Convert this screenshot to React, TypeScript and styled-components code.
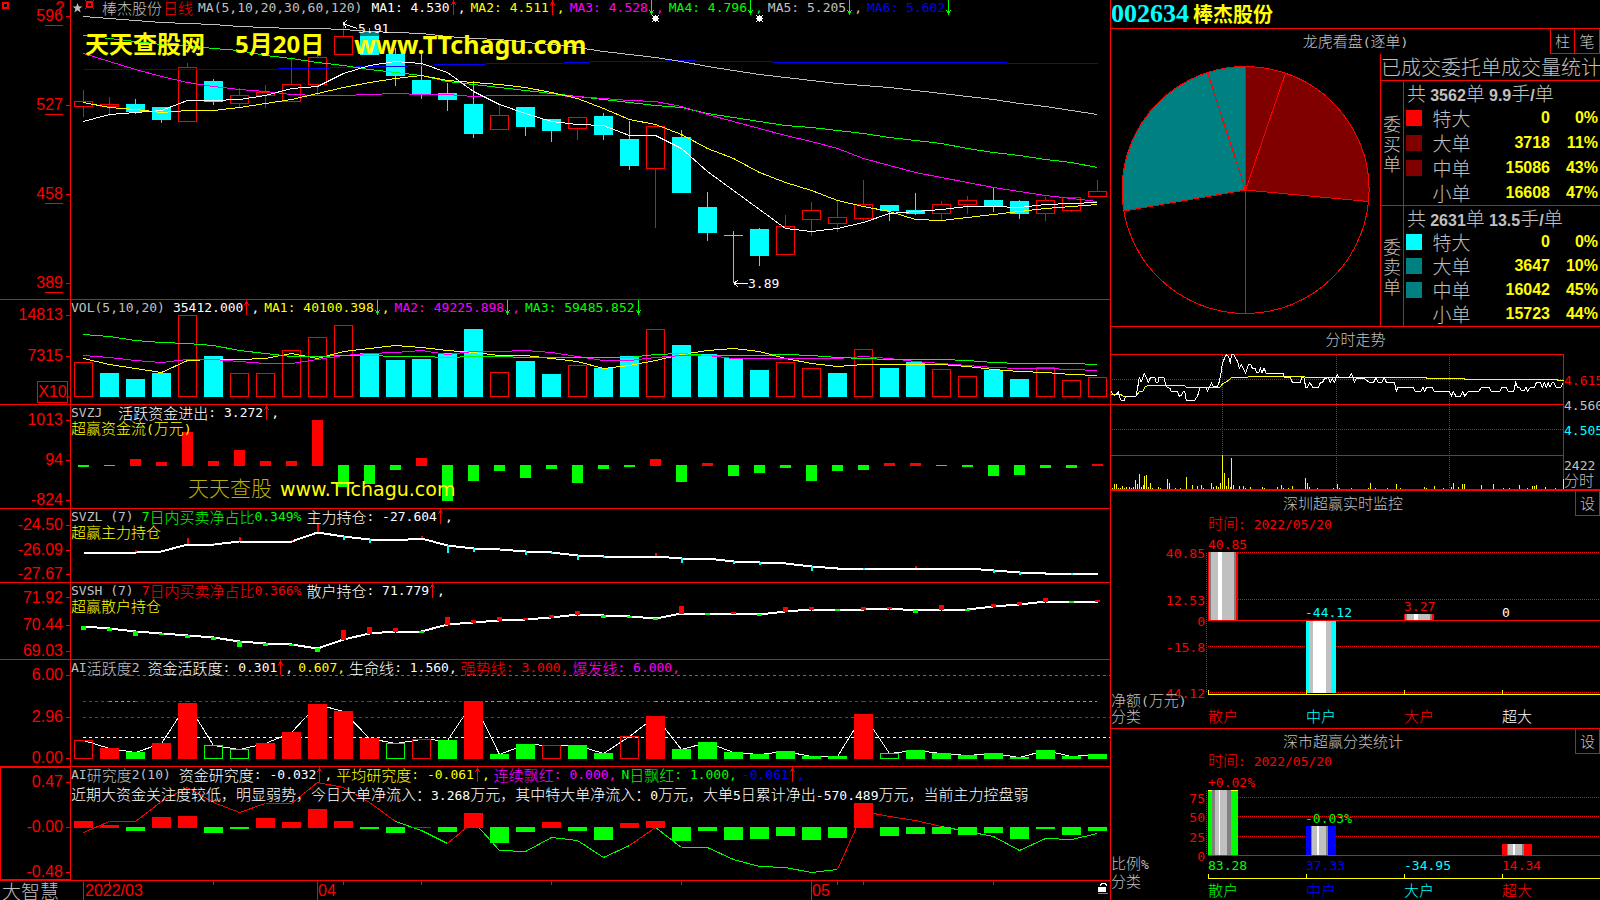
import React from 'react';
import styled, { createGlobalStyle } from 'styled-components';

const RED = '#ff0000';
const GREEN = '#00ff00';
const CYAN = '#00ffff';
const YELLOW = '#ffff00';
const MAGENTA = '#ff00ff';
const BLUE = '#0000ff';
const GRAY = '#c0c0c0';
const DIM = '#808080';
const WHITE = '#ffffff';
const MAROON = '#800000';
const TEAL = '#008080';

const MONO = '"DejaVu Sans Mono", "Noto Sans CJK SC", monospace';
const SANS = '"Liberation Sans", "Noto Sans CJK SC", sans-serif';
const HAN = '"Noto Sans CJK SC", sans-serif';

const GlobalStyle = createGlobalStyle`
  *, *::before, *::after { box-sizing: border-box; }
  body { margin: 0; background: #000; color: ${GRAY}; font-family: ${SANS}; }
`;

/* ---------- layout ---------- */

const Page = styled.main`
  display: grid;
  grid-template-columns: minmax(0, 1fr) 490px;
  min-height: 100vh;
`;

const Charts = styled.section`
  display: grid;
  grid-template-rows: 299fr 105fr 104fr 74fr 77fr 107fr 114fr 20fr;
  min-width: 0;
`;

const Panel = styled.section<{ $first?: boolean }>`
  display: grid;
  grid-template-columns: 71px minmax(0, 1fr);
  border-top: ${(p) => (p.$first ? '0' : `1px solid ${RED}`)};
  min-height: 0;
`;

const Axis = styled.div<{ $active?: boolean }>`
  position: relative;
  border-right: 1px solid ${RED};
  outline: ${(p) => (p.$active ? `1px solid ${RED}` : 'none')};
  outline-offset: -1px;
  color: ${RED};
  font-size: 16px;
  line-height: 18px;
`;

const Tick = styled.div`
  position: absolute;
  right: 0;
  display: flex;
  align-items: center;
  gap: 3px;
  transform: translateY(-50%);
  &::after {
    content: '';
    width: 4px;
    height: 1px;
    background: ${RED};
  }
`;

const Under = styled.span`
  display: inline-block;
  border-bottom: 1px solid ${RED};
  margin-bottom: -1px;
`;

const Multiplier = styled.div`
  position: absolute;
  right: 2px;
  bottom: 1px;
  border: 1px solid ${RED};
  width: 31px;
  height: 22px;
  line-height: 20px;
  text-align: center;
`;

const HelpMark = styled.button`
  position: absolute;
  right: 5px;
  top: 0;
  padding: 0;
  border: 0;
  background: none;
  color: #d00000;
  font: bold 16px/16px ${SANS};
`;

const CornerIcon = styled.svg`
  position: absolute;
  left: 1px;
  top: 1px;
  width: 10px;
  height: 10px;
`;

const Plot = styled.div`
  position: relative;
  min-width: 0;
`;

const PlotSvg = styled.svg`
  position: absolute;
  inset: 0;
  width: 100%;
  height: 100%;
  display: block;
`;

const Legend = styled.div`
  position: relative;
  display: flex;
  height: 15px;
  font: 300 15px/15px ${HAN};
  white-space: pre;
`;

const Part = styled.span<{ $color: string; $gap?: number }>`
  display: flex;
  align-items: center;
  color: ${(p) => p.$color};
  margin-right: ${(p) => p.$gap ?? 5}px;
`;

const Ascii = styled.span`
  font: 13px/15px ${MONO};
  white-space: pre;
`;

const Note = styled.p<{ $color: string; $space?: boolean }>`
  position: relative;
  margin: ${(p) => (p.$space ? '4px' : '0')} 0 0;
  color: ${(p) => p.$color};
  font: 300 15px/15px ${HAN};
  white-space: pre;
`;

const Watermark = styled.div`
  position: absolute;
  display: flex;
  color: ${YELLOW};
  white-space: pre;
`;

const TopMark = styled(Watermark)`
  left: 14px;
  top: 30px;
  gap: 30px;
  font: bold 24px/28px "Noto Sans", "Noto Sans CJK SC", sans-serif;
  & > span:last-child { font-size: 25px; }
`;

const FlowMark = styled(Watermark)`
  left: 117px;
  top: 70px;
  gap: 8px;
  font: 20px/28px "DejaVu Sans", "Noto Sans CJK SC", sans-serif;
  & > span:first-child { color: #b8b000; font-weight: 300; font-size: 21px; }
  & > span:last-child { font-size: 19px; }
`;

const PriceTag = styled.span`
  position: absolute;
  display: flex;
  align-items: center;
  color: ${WHITE};
  font: 13px/14px ${MONO};
  transform: translateY(-50%);
`;

const Brand = styled.div`
  color: ${GRAY};
  font: 300 19px/19px ${HAN};
  padding-left: 2px;
`;

const DateLabel = styled.span`
  position: absolute;
  top: 0;
  color: ${RED};
  font: 16px/19px ${SANS};
`;

const LockIcon = styled.svg`
  position: absolute;
  right: 2px;
  top: 1px;
  width: 11px;
  height: 12px;
`;

/* ---------- side column ---------- */

const Side = styled.aside`
  border-left: 1px solid ${RED};
  min-width: 0;
`;

const StockHead = styled.header`
  display: flex;
  align-items: center;
  gap: 4px;
  height: 28px;
  font: bold 20px/28px ${HAN};
  color: ${YELLOW};
`;

const Code = styled.span`
  color: ${CYAN};
  font: bold 26px/28px "Liberation Serif", serif;
`;

const Box = styled.section<{ $thick?: boolean }>`
  border-top: ${(p) => (p.$thick ? 2 : 1)}px solid ${RED};
`;

const TitleRow = styled.div<{ $height?: number; $pad?: number }>`
  display: flex;
  height: ${(p) => p.$height ?? 25}px;
  padding-left: ${(p) => p.$pad ?? 0}px;
`;

const Title = styled.h2`
  flex: 1;
  margin: 0;
  text-align: center;
  color: ${GRAY};
  font: 300 15px/23px ${HAN};
`;

const SmallButton = styled.button`
  width: 25px;
  height: 25px;
  padding: 0;
  border: 1px solid ${RED};
  border-top: 0;
  background: #000;
  color: ${GRAY};
  font: 300 15px/20px ${HAN};
  & + & { border-left: 0; }
`;

const OrderBody = styled.div`
  display: grid;
  grid-template-columns: 269px minmax(0, 1fr);
  height: 272px;
`;

const Orders = styled.div`
  display: grid;
  grid-template-columns: minmax(0, 1fr);
  grid-template-rows: 26px 125fr 121fr;
  border-left: 1px solid ${RED};
`;

const OrdersTitle = styled.h3`
  margin: 0;
  color: ${GRAY};
  font: 300 20px/26px ${HAN};
  white-space: nowrap;
`;

const Group = styled.div`
  display: grid;
  grid-template-columns: 22px minmax(0, 1fr);
  border-top: 1px solid ${RED};
  min-height: 0;
`;

const Vertical = styled.div`
  display: flex;
  flex-direction: column;
  justify-content: center;
  align-items: center;
  color: ${GRAY};
  font: 300 18px/20px ${HAN};
`;

const OrderTable = styled.table`
  width: 100%;
  height: 100%;
  table-layout: fixed;
  border-collapse: collapse;
  border-left: 1px solid ${RED};
  color: ${GRAY};
  font: 300 19px/20px ${HAN};
  tr { height: 20%; }
  td, th { padding: 0; font-weight: 300; text-align: left; white-space: nowrap; }
`;

const Total = styled.th`
  && { padding-left: 3px; }
`;

const Figure = styled.span`
  font: bold 16px/16px ${SANS};
`;

const Num = styled.td`
  && {
    padding-right: 2px;
    text-align: right;
    color: ${YELLOW};
    font: bold 16px/20px ${SANS};
  }
`;

const Swatch = styled.span<{ $color: string }>`
  display: block;
  width: 16px;
  height: 16px;
  margin-left: 2px;
  background: ${(p) => p.$color};
`;

const Drawing = styled.svg`
  display: block;
  width: 489px;
  text { font: 13px ${MONO}; white-space: pre; }
  .han { font: 300 15px ${HAN}; }
`;

const PieSvg = styled.svg`
  display: block;
  width: 269px;
  height: 272px;
`;

/* ---------- text helpers ---------- */

const runs = (text: string) => text.split(/([\x20-\x7e]+)/).filter(Boolean);
const isAscii = (s: string) => /^[\x20-\x7e]+$/.test(s);

const Mixed = ({ text }: { text: string }) => (
  <>{runs(text).map((r, i) => (isAscii(r) ? <Ascii key={i}>{r}</Ascii> : <span key={i}>{r}</span>))}</>
);

const SvgText = ({ x, y, fill, text, end }: { x: number; y: number; fill: string; text: string; end?: boolean }) => (
  <text x={x} y={y + 4} fill={fill} textAnchor={end ? 'end' : 'start'}>
    {runs(text).map((r, i) => (
      <tspan key={i} className={isAscii(r) ? undefined : 'han'}>{r}</tspan>
    ))}
  </text>
);

const Arrow = ({ dir }: { dir: 'up' | 'down' }) => (
  <svg width="8" height="15" viewBox="0 0 8 15" shapeRendering="crispEdges">
    {dir === 'up' ? (
      <path d="M3 0h1v15h-1zM2 2h3v2h-3zM1 4h1v1h-1zM5 4h1v1h-1z" fill={RED} />
    ) : (
      <path d="M3 0h1v15h-1zM2 11h3v2h-3zM1 10h1v1h-1zM5 10h1v1h-1z" fill={GREEN} />
    )}
  </svg>
);

type Item = { t: string; c: string; a?: 'up' | 'down'; g?: number };

const LegendItems = ({ items }: { items: Item[] }) => (
  <>
    {items.map((it, i) => (
      <Part key={i} $color={it.c} $gap={it.g}>
        <Mixed text={it.t} />
        {it.a && <Arrow dir={it.a} />}
        {it.a && <Ascii>,</Ascii>}
      </Part>
    ))}
  </>
);

/* ---------- chart helpers ---------- */

const LEFT = 71;
const SPAN = 1039;
const cx = (i: number) => 83 + 26 * i;
const pctX = (x: number) => `${((x - LEFT) / SPAN) * 100}%`;

const points = (ys: number[]) => ys.map((y, i) => `${cx(i) + 0.5},${y + 0.5}`).join(' ');

const Line = ({ ys, color, w = 1 }: { ys: number[]; color: string; w?: number }) => (
  <polyline points={points(ys)} fill="none" stroke={color} strokeWidth={w} vectorEffect="non-scaling-stroke" />
);

const Hollow = ({ i, top, bottom, color }: { i: number; top: number; bottom: number; color: string }) => (
  <rect x={cx(i) - 8.5} y={top + 0.5} width={18} height={Math.max(1, bottom - top)} fill="none" stroke={color} vectorEffect="non-scaling-stroke" />
);

const Solid = ({ i, top, bottom, color, w = 19 }: { i: number; top: number; bottom: number; color: string; w?: number }) => (
  <rect x={cx(i) - (w - 1) / 2} y={top} width={w} height={Math.max(1, bottom - top)} fill={color} />
);

type PanelProps = {
  top: number;
  height: number;
  first?: boolean;
  active?: boolean;
  ticks: [number, React.ReactNode][];
  axisExtra?: React.ReactNode;
  drawing: React.ReactNode;
  children: React.ReactNode;
};

const ChartPanel = ({ top, height, first, active, ticks, axisExtra, drawing, children }: PanelProps) => {
  const y0 = first ? top : top + 1;
  const h = first ? height : height - 1;
  return (
    <Panel $first={first}>
      <Axis $active={active}>
        {ticks.map(([y, label], i) => (
          <Tick key={i} style={{ top: `${((y - y0) / h) * 100}%` }}>
            <span>{label}</span>
          </Tick>
        ))}
        {axisExtra}
      </Axis>
      <Plot>
        <PlotSvg viewBox={`${LEFT} ${y0} ${SPAN} ${h}`} preserveAspectRatio="none" shapeRendering="crispEdges">
          {drawing}
        </PlotSvg>
        {children}
      </Plot>
    </Panel>
  );
};

/* ---------- data ---------- */

// [kind, high, body top, body bottom, low]
const candles: [string, number, number, number, number][] = [
  ['r', 90, 101, 106, 117], ['r', 97, 104, 106, 116], ['c', 99, 104, 112, 114], ['c', 107, 107, 120, 123],
  ['r', 63, 67, 121, 121], ['c', 79, 81, 102, 105], ['r', 88, 95, 103, 108], ['r', 85, 92, 95, 108],
  ['r', 57, 84, 101, 101], ['r', 50, 57, 84, 95], ['r', 24, 36, 54, 54], ['c', 28, 32, 55, 55],
  ['c', 48, 54, 76, 86], ['c', 50, 80, 94, 99], ['c', 83, 93, 100, 111], ['c', 81, 104, 134, 138],
  ['r', 104, 115, 129, 129], ['c', 107, 107, 127, 136], ['c', 119, 119, 131, 142], ['r', 117, 117, 128, 140],
  ['c', 113, 116, 135, 140], ['c', 121, 139, 166, 170], ['r', 125, 126, 168, 228], ['c', 130, 137, 193, 193],
  ['c', 192, 207, 233, 241], ['c', 231, 235, 236, 283], ['c', 228, 229, 256, 266], ['r', 215, 226, 254, 254],
  ['r', 202, 210, 219, 236], ['r', 201, 217, 223, 232], ['r', 180, 204, 218, 221], ['c', 205, 205, 211, 221],
  ['c', 193, 210, 214, 215], ['r', 201, 204, 213, 220], ['r', 196, 200, 204, 214], ['c', 188, 200, 206, 212],
  ['c', 200, 201, 214, 219], ['r', 197, 200, 213, 221], ['r', 197, 197, 210, 212], ['r', 180, 191, 196, 196],
];

const ma1 = [121, 114, 112, 110, 100, 100, 99, 95, 88, 86, 73, 65, 61, 63, 72, 91, 104, 113, 121, 124, 125, 135, 135, 148, 171, 190, 209, 228, 231, 228, 222, 213, 211, 209, 206, 206, 207, 204, 203, 202];
const ma2 = [102, 107, 109, 112, 110, 110, 107, 103, 99, 93, 87, 82, 78, 75, 80, 82, 84, 87, 92, 98, 108, 119, 124, 134, 148, 158, 172, 182, 190, 200, 206, 211, 219, 220, 217, 214, 211, 208, 206, 204];
const ma3 = [53, 61, 69, 76, 82, 86, 89, 91, 94, 95, 95, 94, 93, 94, 94, 96, 95, 95, 95, 96, 98, 100, 101, 106, 114, 121, 128, 135, 141, 148, 158, 165, 172, 177, 182, 187, 191, 195, 198, 201];
const ma4 = [35, 38, 41, 44, 45, 48, 50, 55, 58, 62, 65, 69, 72, 75, 81, 84, 87, 90, 93, 96, 99, 102, 105, 107, 113, 117, 121, 125, 127, 130, 133, 137, 140, 143, 148, 152, 155, 159, 162, 167];
const ma5 = [16, 18, 20, 22, 23, 24, 26, 27, 28, 28, 29, 31, 32, 33, 36, 38, 39, 42, 44, 47, 51, 54, 57, 61, 66, 70, 74, 77, 80, 83, 85, 87, 90, 93, 96, 99, 103, 106, 110, 114];
const ma6 = [69, 69, 69, 69, 69, 69, 69, 69, 68, 68, 67, 66, 66, 65, 64, 64, 63, 63, 63, 62, 61, 61, 61, 60, 61, 61, 61, 62, 62, 62, 62, 62, 62, 62, 62, 62, 63, 63, 63, 63];

const volumes = [362, 373, 379, 373, 315, 356, 373, 373, 350, 337, 325, 353, 360, 359, 353, 329, 372, 361, 374, 365, 368, 356, 329, 345, 354, 358, 370, 362, 368, 373, 349, 368, 362, 369, 376, 370, 379, 367, 380, 377];
const volKinds = 'rcccrcrrrrrcccccrccrccrccccrrcrccrrccrrr';
const vol1 = [358, 364, 368, 372, 360, 359, 359, 358, 353, 358, 351, 348, 345, 347, 350, 352, 355, 355, 358, 361, 368, 365, 360, 354, 350, 348, 351, 358, 363, 366, 364, 364, 364, 364, 366, 369, 371, 372, 374, 375];
const vol2 = [355, 357, 360, 362, 359, 359, 361, 363, 363, 359, 355, 353, 352, 350, 354, 351, 351, 350, 352, 356, 360, 360, 357, 355, 355, 358, 358, 358, 358, 358, 356, 358, 361, 363, 365, 367, 368, 368, 369, 370];
const vol3 = [334, 336, 340, 342, 343, 345, 350, 353, 356, 356, 355, 355, 356, 356, 357, 356, 356, 357, 357, 357, 357, 357, 354, 353, 355, 355, 355, 354, 355, 357, 358, 359, 359, 359, 360, 362, 363, 363, 363, 364];

// positive: up from the zero line (red), negative: down (green)
const flow = [-2, -1, 7, 4, 34, 5, 16, 5, 5, 46, -22, -19, -5, 8, -36, -16, -6, -13, -4, -18, -4, -2, 7, -17, 3, -11, -8, -3, -16, -6, -5, 3, 3, -1, -2, -11, -10, -3, -3, 2];

const mainHold = [552, 552, 552, 551, 544, 544, 541, 541, 541, 532, 536, 539, 540, 538, 545, 548, 549, 551, 552, 555, 556, 556, 556, 558, 558, 561, 562, 563, 566, 568, 568, 568, 568, 568, 568, 570, 572, 573, 573, 573];
const mainMarks: Record<number, number> = { 2: -2, 4: -6, 5: -1, 6: -4, 8: -1, 9: -9, 10: 4, 11: 4, 13: -2, 14: 8, 15: 4, 16: 1, 17: 4, 18: 2, 19: 5, 20: 2, 22: -3, 23: 5, 25: 3, 26: 3, 28: 5, 30: 2, 32: -2, 35: 3, 36: 3, 38: 2 };

const retailHold = [626, 628, 631, 633, 635, 637, 641, 643, 644, 648, 639, 633, 631, 631, 624, 622, 620, 619, 617, 614, 615, 616, 618, 613, 613, 613, 614, 611, 609, 609, 609, 608, 610, 609, 609, 606, 604, 601, 601, 601];
const retailMarks = [4, 3, 5, 2, 3, 3, 6, 3, 2, 4, -9, -6, -3, 2, -7, -2, -3, -1, -2, -3, 3, 2, 2, -7, 2, -1, 2, -4, -2, 2, -2, -1, 3, -4, 2, -2, -2, -3, 2, -1];

const activity = [740, 748, 752, 743, 703, 745, 749, 743, 732, 704, 711, 738, 743, 739, 740, 701, 754, 744, 745, 745, 753, 736, 716, 749, 742, 752, 754, 751, 756, 756, 714, 753, 750, 753, 755, 753, 757, 750, 756, 754];
// lower case: solid, upper case: outline
const activityKinds = 'RrgrrGGrrrrrGRgrggRggRrgggggggrGgggggggg';

const research = [7, 3, -4, 11, 12, -6, -2, 10, 6, 19, 7, -2, -6, 1, -5, 15, -16, -5, 6, -4, -13, 5, 7, -14, -4, -13, -12, -9, -13, -11, 25, -9, -7, -7, -8, -6, -12, -2, -8, -4];
const researchLine = [832, 821, 821, 801, 787, 802, 812, 803, 803, 782, 787, 802, 821, 830, 843, 821, 850, 851, 837, 840, 857, 845, 827, 847, 847, 859, 866, 867, 872, 869, 811, 816, 820, 826, 831, 836, 850, 838, 839, 833];
const redSegments = (i: number) => i < 12 || i === 14 || i === 21 || (i >= 29 && i < 33);
const redDashes = (i: number) => i === 0 || (i >= 2 && i < 12) || i === 14 || i === 21 || i === 29 || i === 30;

/* ---------- intraday data, at three units per pixel ---------- */

const intraday =
  '33,200 43,212 49,208 55,200 58,214 64,226 73,226 77,214 108,214 113,188 118,157 123,172 128,160 133,146 139,158 145,172 151,158 165,158 168,172 174,172 176,158 192,158 197,178 202,188 210,190 214,200 233,200 238,214 243,212 249,200 254,200 259,226 284,226 293,212 300,188 317,188 322,198 328,188 334,174 340,186 352,186 358,170 362,150 367,118 374,98 380,88 386,96 391,116 394,90 402,90 408,102 413,110 418,130 424,118 430,130 437,144 442,128 447,118 453,120 457,130 465,130 470,144 476,144 481,130 486,144 492,130 499,145 550,145 553,157 571,158 577,172 601,172 605,157 612,158 617,187 622,187 629,173 639,187 655,187 661,173 668,172 674,160 686,158 691,172 697,160 703,172 709,157 712,148 716,157 748,157 754,146 759,157 763,172 769,160 794,160 797,165 809,172 821,172 828,158 834,172 846,172 853,158 859,172 883,172 889,198 894,187 940,187 946,199 963,199 969,187 974,199 980,187 997,187 1003,199 1048,200 1054,213 1060,200 1068,214 1082,213 1088,200 1094,213 1105,200 1137,199 1144,187 1167,187 1173,199 1200,199 1206,187 1219,187 1225,199 1241,199 1247,173 1253,187 1259,187 1264,198 1272,198 1278,187 1283,199 1291,187 1304,187 1309,173 1322,173 1327,187 1333,173 1339,187 1345,173 1350,187 1356,173 1362,173 1368,187 1383,187 1389,175';
const average =
  '33,208 65,210 70,214 108,214 118,200 130,198 135,186 147,181 254,181 259,187 360,187 368,176 388,165 394,157 444,157 446,154 614,154 616,157 978,157 980,160 1092,161 1094,163 1370,163 1374,166 1391,166';
const turnover =
  '37,489 43,477 49,477 55,489 61,489 67,483 73,489 79,486 88,486 94,489 100,486 106,465 112,477 118,447 124,486 130,480 133,453 139,450 145,486 151,474 157,489 175,486 181,489 202,462 208,474 226,489 241,489 259,456 277,480 292,483 304,480 310,489 334,474 340,486 349,483 355,486 361,474 367,390 373,444 379,483 385,459 391,486 394,399 400,480 418,483 430,483 436,489 451,486 487,486 493,489 532,486 544,480 550,489 565,489 577,483 616,459 622,474 628,486 652,489 700,489 712,477 718,489 754,489 805,489 811,474 826,489 862,489 889,477 901,489 973,486 979,489 1003,483 1030,489 1054,486 1060,474 1075,486 1087,477 1093,477 1144,480 1180,477 1210,489 1228,489 1258,480 1284,489 1297,483 1303,483 1309,480 1336,486 1366,489 1390,462';

/* ---------- side drawings ---------- */

type Band = [number, number, string];
const silver: Band[] = [[1, 2, DIM], [3, 7, GRAY], [10, 4, WHITE], [14, 12, GRAY], [26, 2, DIM]];
const bright: Band[] = [[3, 4, GRAY], [7, 13, WHITE], [20, 5, GRAY]];
const tall: Band[] = [[4, 3, DIM], [7, 4, GRAY], [11, 1, WHITE], [12, 7, GRAY], [19, 4, DIM]];
const narrow: Band[] = [[5, 1, DIM], [6, 5, GRAY], [11, 2, WHITE], [13, 7, GRAY], [20, 2, DIM]];

const Pillar = ({ x, y, h, color, bands }: { x: number; y: number; h: number; color: string; bands: Band[] }) => (
  <g>
    <rect x={x} y={y} width={30} height={h} fill={color} />
    {bands.map(([dx, w, c], i) => (
      <rect key={i} x={x + dx} y={y} width={w} height={h} fill={c} />
    ))}
  </g>
);

const Dotted = ({ x1, y1, x2, y2 }: { x1: number; y1: number; x2: number; y2: number }) => (
  <line x1={x1} y1={y1} x2={x2} y2={y2} stroke={RED} strokeDasharray="1 1" />
);

const COLS = [1208, 1306, 1404, 1502];

const CategoryAxis = ({ y }: { y: number }) => (
  <path d={`M1208 ${y + 0.5}H1600` + COLS.map((x) => `M${x + 0.5} ${y - 4}V${y}`).join('')} stroke={YELLOW} fill="none" />
);

const Pie = () => (
  <PieSvg viewBox="1111 54 269 272" role="img" aria-label="龙虎看盘" shapeRendering="crispEdges">
    <g stroke={RED} strokeWidth="1">
      <circle cx="1245.5" cy="190" r="123.5" fill="none" />
      <path d="M1245.5 190V66.5A123.5 123.5 0 0 1 1285.5 73.2Z" fill={MAROON} />
      <path d="M1245.5 190L1285.5 73.2A123.5 123.5 0 0 1 1368.5 201.5Z" fill={MAROON} />
      <path d="M1245.5 190L1124 211A123.5 123.5 0 0 1 1207.5 72.5Z" fill={TEAL} />
      <path d="M1245.5 190L1207.5 72.5A123.5 123.5 0 0 1 1245.5 66.5Z" fill={TEAL} />
      <path d="M1245.5 66V313.5" fill="none" />
    </g>
  </PieSvg>
);

type OrderRow = [string | null, string, string, string];

const OrderGroup = ({ side, total, rows }: { side: string; total: string[]; rows: OrderRow[] }) => (
  <Group>
    <Vertical>{side.split('').map((ch) => <span key={ch}>{ch}</span>)}</Vertical>
    <OrderTable>
      <colgroup>
        <col style={{ width: 29 }} />
        <col style={{ width: 48 }} />
        <col />
        <col style={{ width: 48 }} />
      </colgroup>
      <tbody>
        <tr>
          <Total colSpan={4} scope="colgroup">
            {total[0]} <Figure>{total[1]}</Figure>单 <Figure>{total[2]}</Figure>手<Figure>/</Figure>单
          </Total>
        </tr>
        {rows.map(([color, name, value, share]) => (
          <tr key={name}>
            <td>{color && <Swatch $color={color} />}</td>
            <th scope="row">{name}</th>
            <Num>{value}</Num>
            <Num>{share}</Num>
          </tr>
        ))}
      </tbody>
    </OrderTable>
  </Group>
);

/* ---------- app ---------- */

const twoUnder = (s: string) => (
  <>
    {s[0]}
    <Under>{s.slice(1)}</Under>
  </>
);

export default function App() {
  return (
    <>
      <GlobalStyle />
      <Page>
        <Charts>
          <ChartPanel
            first
            top={0}
            height={299}
            ticks={[[16, twoUnder('596')], [105, twoUnder('527')], [194, twoUnder('458')], [283, twoUnder('389')]]}
            axisExtra={
              <>
                <CornerIcon viewBox="0 0 10 10" shapeRendering="crispEdges">
                  <path d="M2 2h5v5h-5z" fill="none" stroke={RED} strokeWidth="2" />
                </CornerIcon>
                <HelpMark aria-label="帮助">?</HelpMark>
              </>
            }
            drawing={
              <>
                {candles.map(([k, hi, t, b, lo], i) => {
                  const color = k === 'r' ? RED : CYAN;
                  return (
                    <g key={i}>
                      {hi < t && <rect x={cx(i)} y={hi} width={1} height={t - hi} fill={color} />}
                      {lo > b && <rect x={cx(i)} y={b} width={1} height={lo - b} fill={color} />}
                      {k === 'r' ? <Hollow i={i} top={t} bottom={b} color={RED} /> : <Solid i={i} top={t} bottom={b} color={CYAN} />}
                    </g>
                  );
                })}
                <rect x={360} y={32} width={19} height={4} fill={TEAL} />
                <Line ys={ma6} color={BLUE} />
                <Line ys={ma5} color={GRAY} />
                <Line ys={ma4} color={GREEN} />
                <Line ys={ma3} color={MAGENTA} />
                <Line ys={ma2} color={YELLOW} />
                <Line ys={ma1} color={WHITE} />
                <path d="M343 23.500L357 28.500M343 23.500L347 20.500M343 23.500L346 27.500M734 283.500H748M734 283.500L738 280M734 283.500L738 287" stroke={WHITE} fill="none" />
                {[655, 759].map((x) => (
                  <path key={x} d={`M${x - 2} 16h5v5h-5zM${x} 15h1v7h-1zM${x - 3} 18h7v1h-7zM${x - 3} 15h1v1h-1zM${x + 3} 15h1v1h-1zM${x - 3} 21h1v1h-1zM${x + 3} 21h1v1h-1z`} fill={WHITE} />
                ))}
              </>
            }
          >
            <Legend>
              <Part $color={GRAY} $gap={3}>
                <svg width="28" height="15" viewBox="0 0 28 15">
                  <path d="M6.500 3l1.300 3.400h3.700l-3 2.300 1.200 3.800-3.200-2.300-3.200 2.300 1.200-3.800-3-2.300h3.700z" fill={GRAY} />
                  <g shapeRendering="crispEdges" fill={RED}>
                    <path d="M16 2h5v5h-5z" fill="none" stroke={RED} strokeWidth="2" />
                    <path d="M14 0h1v1h-1zM22 0h1v1h-1zM14 8h1v1h-1zM22 8h1v1h-1z" />
                  </g>
                </svg>
              </Part>
              <Part $color={GRAY} $gap={1}>棒杰股份</Part>
              <Part $color={RED} $gap={5}>日线</Part>
              <LegendItems
                items={[
                  { t: 'MA(5,10,20,30,60,120)', c: GRAY, g: 9 },
                  { t: 'MA1: 4.530', c: WHITE, a: 'up' },
                  { t: 'MA2: 4.511', c: YELLOW, a: 'up' },
                  { t: 'MA3: 4.528', c: MAGENTA, a: 'down' },
                  { t: 'MA4: 4.796', c: GREEN, a: 'down' },
                  { t: 'MA5: 5.205', c: GRAY, a: 'down' },
                ]}
              />
              <Part $color={BLUE}>
                <Ascii>MA6: 5.602</Ascii>
                <Arrow dir="down" />
              </Part>
            </Legend>
            <PriceTag style={{ left: pctX(358), top: `${(29 / 299) * 100}%` }}>5.91</PriceTag>
            <PriceTag style={{ left: pctX(748), top: `${(284 / 299) * 100}%` }}>3.89</PriceTag>
            <TopMark>
              <span>天天查股网</span>
              <span>5月20日</span>
              <span>www.TTchagu.com</span>
            </TopMark>
          </ChartPanel>

          <ChartPanel
            top={299}
            height={105}
            ticks={[[315, '14813'], [356, '7315'], [397, '']]}
            axisExtra={<Multiplier>X10</Multiplier>}
            drawing={
              <>
                {volumes.map((t, i) =>
                  volKinds[i] === 'r' ? <Hollow key={i} i={i} top={t} bottom={396} color={RED} /> : <Solid key={i} i={i} top={t} bottom={397} color={CYAN} />
                )}
                <Line ys={vol1} color={YELLOW} />
                <Line ys={vol2} color={MAGENTA} />
                <Line ys={vol3} color={GREEN} />
              </>
            }
          >
            <Legend>
              <LegendItems
                items={[
                  { t: 'VOL(5,10,20)', c: GRAY, g: 8 },
                  { t: '35412.000', c: WHITE, a: 'up' },
                  { t: 'MA1: 40100.398', c: YELLOW, a: 'down' },
                  { t: 'MA2: 49225.898', c: MAGENTA, a: 'down' },
                ]}
              />
              <Part $color={GREEN}>
                <Ascii>MA3: 59485.852</Ascii>
                <Arrow dir="down" />
              </Part>
            </Legend>
          </ChartPanel>

          <ChartPanel
            top={404}
            height={104}
            ticks={[[420, '1013'], [460, '94'], [500, '-824']]}
            drawing={flow.map((v, i) =>
              v > 0 ? <Solid key={i} i={i} top={466 - v} bottom={466} color={RED} w={11} /> : <Solid key={i} i={i} top={465} bottom={465 - v} color={GREEN} w={11} />
            )}
          >
            <Legend>
              <LegendItems items={[{ t: 'SVZJ', c: GRAY, g: 16 }, { t: '活跃资金进出: 3.272', c: WHITE, a: 'up' }]} />
            </Legend>
            <Note $color={YELLOW}><Mixed text="超赢资金流(万元)" /></Note>
            <FlowMark>
              <span>天天查股</span>
              <span>www.TTchagu.com</span>
            </FlowMark>
          </ChartPanel>

          <ChartPanel
            top={508}
            height={74}
            ticks={[[525, '-24.50'], [550, '-26.09'], [574, '-27.67']]}
            drawing={
              <>
                <Line ys={mainHold} color={WHITE} w={2} />
                {Object.entries(mainMarks).map(([k, v]) => {
                  const i = Number(k);
                  const y = mainHold[i];
                  return <rect key={k} x={cx(i)} y={v < 0 ? y + v : y} width={2} height={Math.abs(v)} fill={v < 0 ? RED : CYAN} />;
                })}
              </>
            }
          >
            <Legend>
              <LegendItems items={[{ t: 'SVZL (7)', c: GRAY, g: 8 }, { t: '7日内买卖净占比0.349%', c: GREEN }, { t: '主力持仓: -27.604', c: WHITE, a: 'up' }]} />
            </Legend>
            <Note $color={YELLOW}>超赢主力持仓</Note>
          </ChartPanel>

          <ChartPanel
            top={582}
            height={77}
            ticks={[[598, '71.92'], [625, '70.44'], [651, '69.03']]}
            drawing={
              <>
                <Line ys={retailHold} color={WHITE} w={2} />
                {retailMarks.map((v, i) => (
                  <Solid key={i} i={i} top={v < 0 ? retailHold[i] + v : retailHold[i]} bottom={v < 0 ? retailHold[i] + 1 : retailHold[i] + v} color={v < 0 ? RED : GREEN} w={5} />
                ))}
              </>
            }
          >
            <Legend>
              <LegendItems items={[{ t: 'SVSH (7)', c: GRAY, g: 8 }, { t: '7日内买卖净占比0.366%', c: RED }, { t: '散户持仓: 71.779', c: WHITE, a: 'up' }]} />
            </Legend>
            <Note $color={YELLOW}>超赢散户持仓</Note>
          </ChartPanel>

          <ChartPanel
            top={659}
            height={107}
            ticks={[[675, '6.00'], [717, '2.96'], [758, '0.00']]}
            drawing={
              <>
                <Line ys={activity} color={WHITE} />
                <g strokeDasharray="3 3">
                  <path d="M83 675.500H1110" stroke={MAGENTA} />
                  <path d="M83 717.500H1110" stroke={RED} />
                  <path d="M83 737.500H1110" stroke={WHITE} />
                  {activity.slice(1).map((_, i) => (
                    <path key={i} d={`M${cx(i)} 701.500H${cx(i + 1)}`} stroke={redDashes(i) ? RED : GREEN} />
                  ))}
                </g>
                {activity.map((t, i) => {
                  const k = activityKinds[i];
                  const color = k.toLowerCase() === 'r' ? RED : GREEN;
                  return k === k.toLowerCase() ? <Solid key={i} i={i} top={t} bottom={759} color={color} /> : <Hollow key={i} i={i} top={t} bottom={758} color={color} />;
                })}
              </>
            }
          >
            <Legend>
              <LegendItems
                items={[
                  { t: 'AI活跃度2', c: GRAY, g: 8 },
                  { t: '资金活跃度: 0.301', c: WHITE, a: 'up' },
                  { t: '0.607,', c: YELLOW, g: 4 },
                  { t: '生命线: 1.560,', c: WHITE, g: 4 },
                  { t: '强势线: 3.000,', c: RED, g: 4 },
                  { t: '爆发线: 6.000,', c: MAGENTA },
                ]}
              />
            </Legend>
          </ChartPanel>

          <ChartPanel
            top={766}
            height={114}
            active
            ticks={[[782, '0.47'], [827, '-0.00'], [872, '-0.48']]}
            drawing={
              <>
                {researchLine.slice(1).map((y, i) => (
                  <line key={i} x1={cx(i) + 0.5} y1={researchLine[i] + 0.5} x2={cx(i + 1) + 0.5} y2={y + 0.5} stroke={redSegments(i) ? RED : GREEN} />
                ))}
                {research.map((v, i) =>
                  v > 0 ? <Solid key={i} i={i} top={828 - v} bottom={828} color={RED} /> : <Solid key={i} i={i} top={827} bottom={827 - v} color={GREEN} />
                )}
              </>
            }
          >
            <Legend>
              <LegendItems
                items={[
                  { t: 'AI研究度2(10)', c: GRAY, g: 8 },
                  { t: '资金研究度: -0.032', c: WHITE, a: 'up', g: 4 },
                  { t: '平均研究度: -0.061', c: YELLOW, a: 'up', g: 4 },
                  { t: '连续飘红: 0.000,', c: MAGENTA },
                  { t: 'N日飘红: 1.000,', c: GREEN },
                  { t: '-0.061', c: BLUE, a: 'up' },
                ]}
              />
            </Legend>
            <Note $color={WHITE} $space>
              <Mixed text="近期大资金关注度较低，明显弱势，今日大单净流入：3.268万元，其中特大单净流入：0万元，大单5日累计净出-570.489万元，当前主力控盘弱" />
            </Note>
          </ChartPanel>

          <Panel>
            <Brand>大智慧</Brand>
            <Plot>
              <PlotSvg viewBox={`${LEFT} 881 ${SPAN} 19`} preserveAspectRatio="none" shapeRendering="crispEdges">
                {[0, 9, 28].map((i) => <rect key={i} x={cx(i)} y={881} width={1} height={19} fill={RED} />)}
                {[1, 5, 10, 13, 18, 23, 29, 30, 35].map((i) => <rect key={i} x={cx(i)} y={881} width={1} height={4} fill={RED} />)}
              </PlotSvg>
              <DateLabel style={{ left: pctX(85) }}>2022/03</DateLabel>
              <DateLabel style={{ left: pctX(318) }}>04</DateLabel>
              <DateLabel style={{ left: pctX(812) }}>05</DateLabel>
              <LockIcon viewBox="0 0 11 12" shapeRendering="crispEdges">
                <path d="M3 4V2h1V1h4v1h1v2" fill="none" stroke={WHITE} />
                <path d="M1 5h8v5h-8z" fill={WHITE} />
                <path d="M1 11h10v-6" fill="none" stroke={DIM} />
              </LockIcon>
            </Plot>
          </Panel>
        </Charts>

        <Side>
          <StockHead>
            <Code>002634</Code>
            <span>棒杰股份</span>
          </StockHead>

          <Box>
            <TitleRow $pad={50}>
              <Title>龙虎看盘<Ascii>(</Ascii>逐单<Ascii>)</Ascii></Title>
              <SmallButton>柱</SmallButton>
              <SmallButton>笔</SmallButton>
            </TitleRow>
            <OrderBody>
              <Pie />
              <Orders>
                <OrdersTitle>已成交委托单成交量统计</OrdersTitle>
                <OrderGroup
                  side="委买单"
                  total={['共', '3562', '9.9']}
                  rows={[[RED, '特大', '0', '0%'], [MAROON, '大单', '3718', '11%'], [MAROON, '中单', '15086', '43%'], [null, '小单', '16608', '47%']]}
                />
                <OrderGroup
                  side="委卖单"
                  total={['共', '2631', '13.5']}
                  rows={[[CYAN, '特大', '0', '0%'], [TEAL, '大单', '3647', '10%'], [TEAL, '中单', '16042', '45%'], [null, '小单', '15723', '44%']]}
                />
              </Orders>
            </OrderBody>
          </Box>

          <Box>
            <TitleRow $height={27}>
              <Title>分时走势</Title>
            </TitleRow>
            <Drawing viewBox="1111 354 489 135" height="135">
              <g shapeRendering="crispEdges" fill="none">
                <path d="M1111 354.500H1563.500V489M1111 404.500H1563M1111 455.500H1563" stroke={RED} />
                <Dotted x1={1112} y1={379.5} x2={1563} y2={379.5} />
                <Dotted x1={1112} y1={429.5} x2={1563} y2={429.5} />
                {[1222.5, 1336.5, 1449.5].map((x) => <Dotted key={x} x1={x} y1={355} x2={x} y2={489} />)}
                <g transform="translate(1100 325) scale(0.33333)">
                  <path
                    d={turnover.split(' ').map((p) => { const [x, y] = p.split(','); return `M${x} 492V${y}`; }).join('')}
                    stroke={YELLOW}
                    vectorEffect="non-scaling-stroke"
                  />
                  <polyline points={average} stroke={YELLOW} vectorEffect="non-scaling-stroke" />
                  <polyline points={intraday} stroke={WHITE} vectorEffect="non-scaling-stroke" />
                </g>
              </g>
              <SvgText x={1564} y={381} fill={RED} text="4.615" />
              <SvgText x={1564} y={406} fill={GRAY} text="4.560" />
              <SvgText x={1564} y={431} fill={CYAN} text="4.505" />
              <SvgText x={1564} y={466} fill={GRAY} text="2422" />
              <SvgText x={1564} y={482} fill={GRAY} text="分时" />
            </Drawing>
          </Box>

          <Box $thick>
            <TitleRow>
              <Title>深圳超赢实时监控</Title>
              <SmallButton>设</SmallButton>
            </TitleRow>
            <Drawing viewBox="1111 516 489 212" height="212">
              <g shapeRendering="crispEdges">
                <Dotted x1={1206.5} y1={553} x2={1206.5} y2={693} />
                {[552.5, 599.5, 646.5, 692.5].map((y) => <Dotted key={y} x1={1208} y1={y} x2={1600} y2={y} />)}
                <Pillar x={1208} y={552} h={68} color={RED} bands={silver} />
                <Pillar x={1306} y={621} h={72} color={CYAN} bands={bright} />
                <Pillar x={1404} y={614} h={6} color={RED} bands={silver} />
                <path d="M1208 620.500H1600" stroke={RED} />
                <CategoryAxis y={694} />
              </g>
              <SvgText x={1208} y={525} fill={RED} text="时间: 2022/05/20" />
              <SvgText x={1208} y={545} fill={RED} text="40.85" />
              <SvgText x={1205} y={554} fill={RED} text="40.85" end />
              <SvgText x={1205} y={601} fill={RED} text="12.53" end />
              <SvgText x={1205} y={622} fill={RED} text="0" end />
              <SvgText x={1205} y={648} fill={RED} text="-15.8" end />
              <SvgText x={1205} y={694} fill={RED} text="-44.12" end />
              <SvgText x={1305} y={613} fill={CYAN} text="-44.12" />
              <SvgText x={1404} y={607} fill={RED} text="3.27" />
              <SvgText x={1502} y={613} fill={WHITE} text="0" />
              <SvgText x={1111} y={702} fill={GRAY} text="净额(万元)" />
              <SvgText x={1111} y={718} fill={GRAY} text="分类" />
              {['散户', '中户', '大户', '超大'].map((t, i) => (
                <SvgText key={t} x={COLS[i]} y={718} fill={[RED, CYAN, RED, WHITE][i]} text={t} />
              ))}
            </Drawing>
          </Box>

          <Box>
            <TitleRow>
              <Title>深市超赢分类统计</Title>
              <SmallButton>设</SmallButton>
            </TitleRow>
            <Drawing viewBox="1111 754 489 146" height="146">
              <g shapeRendering="crispEdges">
                <Dotted x1={1206.5} y1={791} x2={1206.5} y2={855} />
                {[797.5, 816.5, 836.5].map((y) => <Dotted key={y} x1={1208} y1={y} x2={1600} y2={y} />)}
                <Pillar x={1208} y={790} h={65} color={GREEN} bands={tall} />
                <path d="M1208 790.500h4M1231 790.500h7" stroke={YELLOW} />
                <Pillar x={1306} y={826} h={29} color={BLUE} bands={narrow} />
                <Pillar x={1502} y={844} h={11} color={RED} bands={narrow} />
                <path d="M1208 855.500H1600" stroke={RED} />
                <CategoryAxis y={878} />
              </g>
              <SvgText x={1208} y={762} fill={RED} text="时间: 2022/05/20" />
              <SvgText x={1208} y={783} fill={RED} text="+0.02%" />
              <SvgText x={1305} y={819} fill={GREEN} text="-0.03%" />
              <SvgText x={1205} y={799} fill={RED} text="75" end />
              <SvgText x={1205} y={818} fill={RED} text="50" end />
              <SvgText x={1205} y={838} fill={RED} text="25" end />
              <SvgText x={1205} y={857} fill={RED} text="0" end />
              {['83.28', '37.33', '-34.95', '14.34'].map((t, i) => (
                <SvgText key={t} x={COLS[i]} y={866} fill={[GREEN, BLUE, CYAN, RED][i]} text={t} />
              ))}
              <SvgText x={1111} y={865} fill={GRAY} text="比例%" />
              <SvgText x={1111} y={883} fill={GRAY} text="分类" />
              {['散户', '中户', '大户', '超大'].map((t, i) => (
                <SvgText key={t} x={COLS[i]} y={892} fill={[GREEN, BLUE, CYAN, RED][i]} text={t} />
              ))}
            </Drawing>
          </Box>
        </Side>
      </Page>
    </>
  );
}
